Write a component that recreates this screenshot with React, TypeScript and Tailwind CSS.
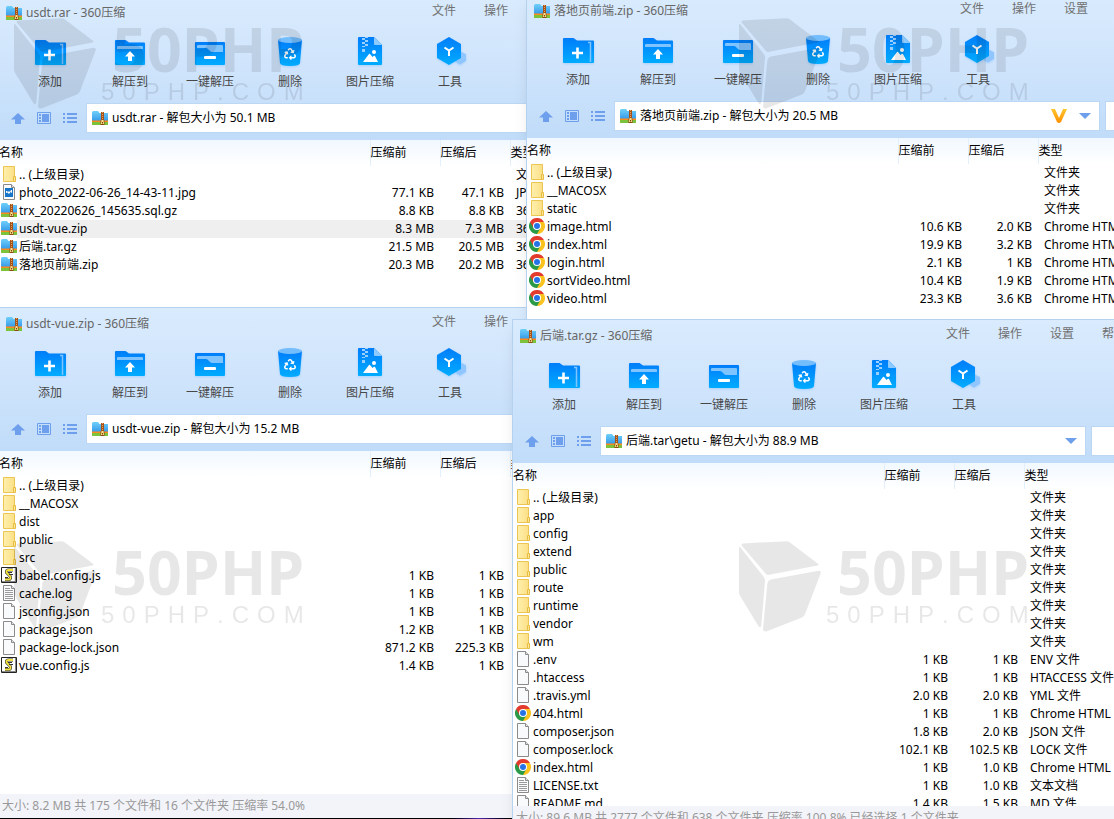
import type { ReactNode } from "react";
import { FaRecycle } from "react-icons/fa";

type Kind = "folder" | "archive" | "image" | "chrome" | "script" | "text" | "file";
type Row = { name: string; kind: Kind; before?: string; after?: string; type: string };

type WindowProps = {
  className: string;
  title: string;
  path: string;
  rows: Row[];
  status?: string;
  selected?: string;
  vip?: boolean;
};

const folder = (name: string): Row => ({ name, kind: "folder", type: "文件夹" });
const file = (name: string, kind: Kind, before: string, after: string, type: string): Row => ({
  name,
  kind,
  before,
  after,
  type,
});

const usdtRows: Row[] = [
  folder(".. (上级目录)"),
  file("photo_2022-06-26_14-43-11.jpg", "image", "77.1 KB", "47.1 KB", "JPG 文件"),
  file("trx_20220626_145635.sql.gz", "archive", "8.8 KB", "8.8 KB", "360压缩"),
  file("usdt-vue.zip", "archive", "8.3 MB", "7.3 MB", "360压缩"),
  file("后端.tar.gz", "archive", "21.5 MB", "20.5 MB", "360压缩"),
  file("落地页前端.zip", "archive", "20.3 MB", "20.2 MB", "360压缩"),
];

const landingRows: Row[] = [
  folder(".. (上级目录)"),
  folder("__MACOSX"),
  folder("static"),
  file("image.html", "chrome", "10.6 KB", "2.0 KB", "Chrome HTML"),
  file("index.html", "chrome", "19.9 KB", "3.2 KB", "Chrome HTML"),
  file("login.html", "chrome", "2.1 KB", "1 KB", "Chrome HTML"),
  file("sortVideo.html", "chrome", "10.4 KB", "1.9 KB", "Chrome HTML"),
  file("video.html", "chrome", "23.3 KB", "3.6 KB", "Chrome HTML"),
];

const vueRows: Row[] = [
  folder(".. (上级目录)"),
  folder("__MACOSX"),
  folder("dist"),
  folder("public"),
  folder("src"),
  file("babel.config.js", "script", "1 KB", "1 KB", "JS 文件"),
  file("cache.log", "text", "1 KB", "1 KB", "文本文档"),
  file("jsconfig.json", "file", "1 KB", "1 KB", "JSON 文件"),
  file("package.json", "file", "1.2 KB", "1 KB", "JSON 文件"),
  file("package-lock.json", "file", "871.2 KB", "225.3 KB", "JSON 文件"),
  file("vue.config.js", "script", "1.4 KB", "1 KB", "JS 文件"),
];

const backendRows: Row[] = [
  folder(".. (上级目录)"),
  folder("app"),
  folder("config"),
  folder("extend"),
  folder("public"),
  folder("route"),
  folder("runtime"),
  folder("vendor"),
  folder("wm"),
  file(".env", "file", "1 KB", "1 KB", "ENV 文件"),
  file(".htaccess", "file", "1 KB", "1 KB", "HTACCESS 文件"),
  file(".travis.yml", "file", "2.0 KB", "2.0 KB", "YML 文件"),
  file("404.html", "chrome", "1 KB", "1 KB", "Chrome HTML"),
  file("composer.json", "file", "1.8 KB", "2.0 KB", "JSON 文件"),
  file("composer.lock", "file", "102.1 KB", "102.5 KB", "LOCK 文件"),
  file("index.html", "chrome", "1 KB", "1.0 KB", "Chrome HTML"),
  file("LICENSE.txt", "text", "1 KB", "1.0 KB", "文本文档"),
  file("README.md", "file", "1.4 KB", "1.5 KB", "MD 文件"),
];

function ArchiveIcon() {
  return (
    <svg viewBox="0 0 16 16" className="w-4 h-4 shrink-0" aria-hidden="true">
      <path d="M0 2.5Q0 1 1.5 1H6l1.5 2H16v9H0z" fill="url(#archive)" />
      <path d="M0 10.500h16V12H0z" fill="#ff8a1c" />
      <path d="M0 12h16v2.5q0 .5-.5.5H.5Q0 15 0 14.5z" fill="#7cc23a" />
      <path d="M9 2h3v9H9z" fill="#a4521a" />
      <path d="M10 2h1v1h-1zm0 2h1v1h-1zm0 2h1v1h-1zm0 2h1v1h-1z" fill="#e6a25a" />
      <path d="M8.5 10.5h4V15h-4z" fill="#8a4a12" />
      <path d="M9.5 10h2l.5 4h-3z" fill="#ffe08a" />
      <path d="M10 12h1v1.500h-1z" fill="#7a4310" />
    </svg>
  );
}

function Page({ children }: { children?: ReactNode }) {
  return (
    <svg viewBox="0 0 16 16" className="w-4 h-4 shrink-0" aria-hidden="true">
      <path d="M2.500.5h8l3 3v12h-11z" fill="#f9fafb" stroke="#8b8b8b" />
      <path d="M10.500.5v3h3" fill="#e4e4e4" stroke="#8b8b8b" />
      {children}
    </svg>
  );
}

function FileIcon({ kind }: { kind: Kind }) {
  if (kind === "archive") return <ArchiveIcon />;
  if (kind === "file") return <Page />;
  if (kind === "text") {
    return (
      <Page>
        <path d="M4 3.500h5M4 5.500h8M4 7.500h8M4 9.500h8M4 11.500h8M4 13.500h8" stroke="#9a9a9a" />
      </Page>
    );
  }
  if (kind === "image") {
    return (
      <Page>
        <path d="M4 4h8v9H4z" fill="#1674c9" />
        <path d="M5 9V7h1l1 1 1-1 1 1 1-2h1v3l-1.500-1L8 10 6.500 8.500z" fill="#fff" />
      </Page>
    );
  }
  if (kind === "folder") {
    return (
      <svg viewBox="0 0 16 16" className="w-4 h-4 shrink-0" aria-hidden="true">
        <path d="M2.500.5h11v15h-11z" fill="url(#folder)" stroke="#ecc653" />
        <path d="M12.500 10.500h2v5h-2z" fill="#fce596" stroke="#e8bd42" />
      </svg>
    );
  }
  if (kind === "chrome") {
    return (
      <svg viewBox="0 0 48 48" className="w-4 h-4 shrink-0" aria-hidden="true">
        <path d="M24 24L3.200 12A24 24 0 0 1 44.800 12z" fill="#e33b2e" />
        <path d="M24 24L44.800 12A24 24 0 0 1 24 48z" fill="#fcc31e" />
        <path d="M24 24L24 48A24 24 0 0 1 3.200 12z" fill="#2a9a48" />
        <path d="M24 12h20.800L34.400 30z" fill="#fcc31e" />
        <path d="M3.200 12L13.600 30 24 12z" fill="#e33b2e" />
        <path d="M34.400 30L24 48 13.600 30z" fill="#2a9a48" />
        <circle cx="24" cy="24" r="12" fill="#fff" />
        <circle cx="24" cy="24" r="9" fill="#2673e8" />
      </svg>
    );
  }
  return (
    <svg viewBox="0 0 16 16" className="w-4 h-4 shrink-0" aria-hidden="true">
      <path d="M.5.5h15v15H.5z" fill="#fff" stroke="#222" />
      <path d="M1 14.500h14M14.500 1v14" stroke="#888" />
      <path d="M12 3H7.500Q5 3 5.500 5.500L9 9q1.500 3-1 3.500H4" fill="none" stroke="#333" strokeWidth="3" />
      <path d="M12 3H7.500Q5 3 5.500 5.500L9 9q1.500 3-1 3.500H4" fill="none" stroke="#f3e33c" strokeWidth="1.800" />
      <path d="M7 5.500h4M8 7.500h4M4 10.500h3" stroke="#333" />
    </svg>
  );
}

const tools: { label: string; art: ReactNode }[] = [
  {
    label: "添加",
    art: (
      <>
        <path d="M1 4q0-1 1-1h9.500L15 5.500h16q1 0 1 1V27q0 1-1 1H2q-1 0-1-1z" fill="url(#tool)" />
        <path d="M26 7.500h2.500V27" fill="none" stroke="#7fc3ff" strokeWidth="1.500" />
        <path d="M15.500 12.500v11M10 18h11" stroke="#fff" strokeWidth="2.600" />
      </>
    ),
  },
  {
    label: "解压到",
    art: (
      <>
        <path d="M1 4q0-1 1-1h9.500L15 5.500h15q1 0 1 1V27q0 1-1 1H2q-1 0-1-1z" fill="url(#tool)" />
        <path d="M4 9h24q1 0 1 1v2H3v-2q0-1 1-1z" fill="#7fc3ff" />
        <path d="M16 14l5 5.500h-3V24h-4v-4.500h-3z" fill="#fff" />
      </>
    ),
  },
  {
    label: "一键解压",
    art: (
      <>
        <rect x="1" y="5" width="30" height="23" rx="1" fill="url(#tool)" />
        <path d="M4 8h24q1 0 1 1v6H18q-1 0-2-1l-2-2q-1-1-2-1H3V9q0-1 1-1z" fill="#7fc3ff" />
        <rect x="10" y="19" width="12" height="3" rx="1" fill="#fff" />
      </>
    ),
  },
  {
    label: "删除",
    art: (
      <>
        <path d="M4 3l2 23q.2 3 10 3t10-3l2-23z" fill="url(#tool)" />
        <ellipse cx="16" cy="3" rx="12" ry="3" fill="#74bdfc" />
        <FaRecycle x="10" y="11" size={12} color="#fff" />
      </>
    ),
  },
  {
    label: "图片压缩",
    art: (
      <>
        <path d="M4 1q0-1 1-1h15l8 8v19q0 1-1 1H5q-1 0-1-1z" fill="url(#tool)" />
        <path d="M20 0l8 8h-7q-1 0-1-1z" fill="#8ccaff" />
        <path d="M8 1h3v2H8zm3 2h3v2h-3zM8 5h3v2H8zm3 2h3v2h-3zM11 0h3v1h-3zM8 9h3v1H8zM8 12h3v3H8z" fill="#9ad0ff" />
        <path d="M9 25l6-8q.5-.5 1 0l2.500 3 1.500-1.200q.5-.3 1 .2L24 25z" fill="#fff" />
        <circle cx="20" cy="15" r="2" fill="#fff" />
      </>
    ),
  },
  {
    label: "工具",
    art: (
      <>
        <path d="M26 14l6 3.300v6.500L26 27.500l-6-3.700v-6.500z" fill="#8fc6ff" />
        <path d="M15 0l12 7v14l-12 7-12-7V7z" fill="url(#tool)" />
        <path d="M10.500 10.500L15 13.500l4.500-3M15 13.500V19" fill="none" stroke="#fff" strokeWidth="2" />
      </>
    ),
  },
];

const navButtons: { label: string; art: ReactNode }[] = [
  { label: "向上", art: <path d="M7 1l7 6.500h-4V12H4V7.500H0z" fill="#6e9fec" /> },
  {
    label: "预览",
    art: (
      <>
        <path d="M.5.5h13v11H.5z" fill="none" stroke="#6e9fec" />
        <path d="M5 2h7v8H5zM2 2h2v2H2zM2 5h2v2H2zM2 8h2v2H2z" fill="#6e9fec" />
      </>
    ),
  },
  {
    label: "列表",
    art: <path d="M0 1h2v2H0zm4 0h10v2H4zM0 5h2v2H0zm4 0h10v2H4zM0 9h2v2H0zm4 0h10v2H4z" fill="#6e9fec" />,
  },
];

function ArchiveWindow({ className, title, path, rows, status, selected, vip }: WindowProps) {
  return (
    <section
      aria-label={title}
      className={`absolute w-[748px] h-[511px] flex flex-col border border-b-0 border-[#b4d2f0] bg-white shadow-lg overflow-hidden ${className}`}
    >
      <div className="h-[143px] shrink-0 bg-linear-to-b from-[#d9ebfd] via-[#cfe4fc] to-[#c0dcf9]">
        <header className="h-8 flex items-center">
          <h2 className="w-[433px] pl-[7px] flex items-center gap-1 text-[#666]">
            <ArchiveIcon />
            {title} - 360压缩
          </h2>
          <nav className="flex gap-7 pb-1 text-[#707070]">
            <button type="button">文件</button>
            <button type="button">操作</button>
            <button type="button">设置</button>
            <button type="button">帮助</button>
          </nav>
        </header>

        <div className="flex pl-[11px] pt-2">
          {tools.map((tool) => (
            <button key={tool.label} type="button" className="w-20 flex flex-col items-center gap-[5px] text-[#484848]">
              <svg viewBox="0 0 32 32" className="w-8 h-8 drop-shadow-xs drop-shadow-blue-400/30" aria-hidden="true">
                {tool.art}
              </svg>
              {tool.label}
            </button>
          ))}
        </div>

        <div className="flex items-center pl-3 pr-2 pt-[13px]">
          <div className="flex gap-3 mr-[9px]">
            {navButtons.map((btn) => (
              <button key={btn.label} type="button" aria-label={btn.label}>
                <svg viewBox="0 0 14 12" className="w-[14px] h-3" aria-hidden="true">
                  {btn.art}
                </svg>
              </button>
            ))}
          </div>
          <div className="flex-1 h-[30px] flex items-center gap-1 pl-[5px] pr-2 bg-white border border-[#bcd7f4]">
            <ArchiveIcon />
            <input aria-label="路径" defaultValue={path} className="flex-1 min-w-0 text-black outline-none" />
            {vip && (
              <svg viewBox="0 0 16 14" className="w-4 h-[14px] mr-2" aria-hidden="true">
                <path d="M0 0h4l4 9 4-9h4l-6 13q-2 2-4 0z" fill="url(#vip)" />
              </svg>
            )}
            <button type="button" aria-label="展开路径">
              <svg viewBox="0 0 12 6" className="w-3 h-[6px]" aria-hidden="true">
                <path d="M0 0h12L6 6z" fill="#6e9fec" />
              </svg>
            </button>
          </div>
          <input
            aria-label="搜索"
            className="w-[160px] h-[30px] ml-[5px] px-2 bg-white border border-[#bcd7f4] outline-none"
          />
        </div>
      </div>

      <div className="flex-1 min-h-0 overflow-hidden">
        <table className="w-full table-fixed text-black">
          <thead>
            <tr className="h-[26px] bg-linear-to-b from-[#f1f8ff] to-white text-left">
              <th className="w-[371px] border-r border-[#e3f0fc] font-normal">名称</th>
              <th className="w-[70px] border-r border-[#e3f0fc] font-normal">压缩前</th>
              <th className="w-[70px] border-r border-[#e3f0fc] font-normal">压缩后</th>
              <th className="font-normal">类型</th>
            </tr>
          </thead>
          <tbody>
            {rows.map((row) => (
              <tr key={row.name} className={row.name === selected ? "h-[18px] bg-[#efefef]" : "h-[18px]"}>
                <td>
                  <div className="flex items-center h-[18px]">
                    <span className="w-[18px] h-[18px] mr-[2px] pl-[2px] shrink-0 bg-white">
                      <FileIcon kind={row.kind} />
                    </span>
                    {row.name}
                  </div>
                </td>
                <td className="pr-[6px] text-right">{row.before}</td>
                <td className="pr-[6px] text-right">{row.after}</td>
                <td className="pl-[6px] whitespace-nowrap">{row.type}</td>
              </tr>
            ))}
          </tbody>
        </table>
      </div>

      {status && (
        <footer className="h-6 shrink-0 flex items-center pl-[3px] bg-[#f3f4f9] text-[#999]">{status}</footer>
      )}
    </section>
  );
}

function Watermark({ className }: { className: string }) {
  return (
    <div className={`absolute flex items-start opacity-9 text-black pointer-events-none ${className}`}>
      <svg viewBox="0 0 246 272" className="w-[82px] h-[91px]" fill="currentColor" aria-hidden="true">
        <path d="M12 7L142 0q6 0 11 4l84 64q4 4-1 5L91 101q-7 2-11-3L8 13q-2-5 4-6z" />
        <path d="M4 18l70 89q5 6 4 13L67 252q-2 10-8 4L2 162q-2-4-2-8V20q1-5 4-2z" />
        <path d="M100 114l138-25q9-1 7 8l-47 122q-3 7-9 10L82 271q-10 2-10-7l13-137q1-11 15-13z" />
      </svg>
      <div>
        <p className="pl-4 text-[61px] leading-[62px] font-bold whitespace-nowrap">50PHP</p>
        <p className="flex gap-2 pl-[5px] font-['Liberation_Sans',sans-serif] text-2xl leading-6">
          {"50PHP.COM".split("").map((letter, i) => (
            <span key={i}>{letter}</span>
          ))}
        </p>
      </div>
    </div>
  );
}

export default function App() {
  return (
    <main className="relative w-full h-screen overflow-hidden bg-linear-to-r from-black from-40% via-[#5a30c8] via-43% to-black to-46% font-['Noto_Sans','Noto_Sans_CJK_SC',sans-serif] text-xs">
      <svg className="absolute w-0 h-0" aria-hidden="true">
        <defs>
          <linearGradient id="tool" x2="0" y2="1">
            <stop stopColor="#007dfa" />
            <stop offset="1" stopColor="#00acff" />
          </linearGradient>
          <linearGradient id="archive" x2="0" y2="1">
            <stop stopColor="#6fd0fa" />
            <stop offset="1" stopColor="#3194e6" />
          </linearGradient>
          <linearGradient id="folder">
            <stop stopColor="#fff0ae" />
            <stop offset="1" stopColor="#fbdf85" />
          </linearGradient>
          <linearGradient id="vip" x2="0" y2="1">
            <stop stopColor="#ffc62e" />
            <stop offset="1" stopColor="#ff8f00" />
          </linearGradient>
        </defs>
      </svg>

      <ArchiveWindow
        className="-left-[2px] -top-1"
        title="usdt.rar"
        path="usdt.rar - 解包大小为 50.1 MB"
        rows={usdtRows}
        selected="usdt-vue.zip"
      />
      <ArchiveWindow
        className="-left-[2px] top-[307px]"
        title="usdt-vue.zip"
        path="usdt-vue.zip - 解包大小为 15.2 MB"
        rows={vueRows}
        status="大小: 8.2 MB 共 175 个文件和 16 个文件夹 压缩率 54.0%"
      />
      <ArchiveWindow
        className="left-[526px] -top-[6px]"
        title="落地页前端.zip"
        path="落地页前端.zip - 解包大小为 20.5 MB"
        rows={landingRows}
        vip
      />
      <ArchiveWindow
        className="left-[512px] top-[319px]"
        title="后端.tar.gz"
        path="后端.tar\getu - 解包大小为 88.9 MB"
        rows={backendRows}
        status="大小: 89.6 MB 共 2777 个文件和 638 个文件夹 压缩率 100.8% 已经选择 1 个文件夹"
      />

      <Watermark className="left-[14px] top-[18px]" />
      <Watermark className="left-[739px] top-[18px]" />
      <Watermark className="left-[14px] top-[541px]" />
      <Watermark className="left-[739px] top-[541px]" />
    </main>
  );
}
